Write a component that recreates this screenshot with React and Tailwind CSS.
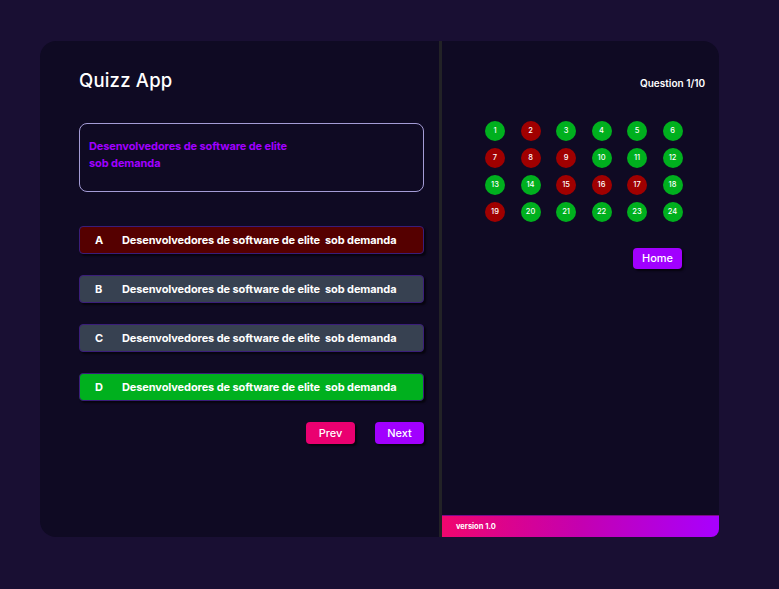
import React from "react";

const reds = new Set([2, 7, 8, 9, 15, 16, 17, 19]);

export default function App() {
  const nums = Array.from({ length: 24 }, (_, i) => i + 1);
  const options = [
    { l: "A", bg: "bg-[#550000]" },
    { l: "B", bg: "bg-[#374151]" },
    { l: "C", bg: "bg-[#374151]" },
    { l: "D", bg: "bg-[#00b01e]" },
  ];
  return (
    <div
      className="w-[779px] h-[589px] bg-[#190f33] pt-[41px] pl-[40px]"
      style={{ fontFamily: "Inter, 'Noto Sans', sans-serif" }}
    >
      <div className="flex w-[679px] h-[496px] bg-[#0f0a23] rounded-[16px]">
        {/* Left */}
        <div className="w-[399px] h-full pl-[39px] pr-[15px] pt-[26px]">
          <h1 className="text-[18.5px] leading-[26px] font-medium text-white tracking-[0.2px]">Quizz App</h1>
          <div className="mt-[30px] h-[69px] border border-[#a49cd6] rounded-[8px] pl-[9px] pt-[14px]">
            <p className="text-[11px] leading-[17px] font-bold text-[#a100ff] tracking-[-0.1px]">
              Desenvolvedores de software de elite
              <br />
              sob demanda
            </p>
          </div>
          <div className="mt-[34px] flex flex-col gap-[21px]">
            {options.map((o) => (
              <div
                key={o.l}
                className={`${o.bg} h-[28px] rounded-[4px] border border-[#3a1d7a] shadow-[2px_2px_2px_rgba(0,0,0,0.6)] flex items-center text-white font-bold text-[11px]`}
              >
                <span className="w-[42px] pl-[15px]">{o.l}</span>
                <span className="tracking-[-0.1px]">Desenvolvedores de software de elite&nbsp; sob demanda</span>
              </div>
            ))}
          </div>
          <div className="mt-[21px] flex justify-end gap-[20px]">
            <button className="w-[49px] h-[22px] rounded-[4px] bg-[#ea0070] text-white text-[11px] font-medium shadow-[2px_2px_2px_rgba(0,0,0,0.6)]">
              Prev
            </button>
            <button className="w-[49px] h-[22px] rounded-[4px] bg-[#a100ff] text-white text-[11px] font-medium shadow-[2px_2px_2px_rgba(0,0,0,0.6)]">
              Next
            </button>
          </div>
        </div>
        {/* Divider */}
        <div className="w-[3px] h-full bg-[#222226]" />
        {/* Right */}
        <div className="flex-1 h-full flex flex-col">
          <div className="flex-1 flex flex-col">
            <p className="mt-[35px] pr-[14px] text-right text-white text-[10px] font-semibold">Question 1/10</p>
            <div className="mt-[30px] ml-[43px] grid grid-cols-[repeat(6,20px)] gap-x-[15.5px] gap-y-[7px]">
              {nums.map((n) => (
                <div
                  key={n}
                  className={`w-[20px] h-[20px] rounded-full flex items-center justify-center text-white text-[7.5px] font-medium ${
                    reds.has(n) ? "bg-[#a00000]" : "bg-[#00b01e]"
                  }`}
                >
                  {n}
                </div>
              ))}
            </div>
            <div className="mt-[22px] pl-[191px]">
              <button className="w-[49px] h-[21px] rounded-[4px] bg-[#a100ff] text-white text-[11px] font-medium shadow-[2px_2px_2px_rgba(0,0,0,0.6)]">
                Home
              </button>
            </div>
          </div>
          <div className="h-[22px] bg-[linear-gradient(to_right,#f0066e,#c400b0_50%,#a800ff)] border-t border-[#7a0a8a] rounded-br-[8px] flex items-center pl-[14px] text-white text-[7.5px] font-bold">
            version 1.0
          </div>
        </div>
      </div>
    </div>
  );
}
